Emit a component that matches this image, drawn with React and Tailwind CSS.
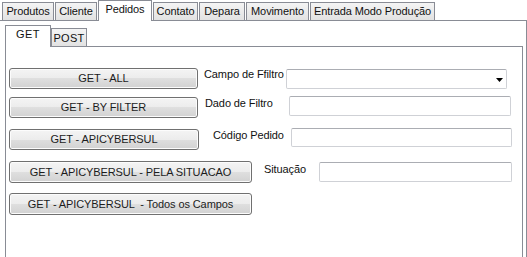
const btn =
  'flex items-center justify-center shrink-0 rounded-[3px] border border-[#707070] bg-[linear-gradient(to_bottom,#f4f4f4_0%,#ececec_50%,#dfdfdf_50%,#d2d2d2_100%)] shadow-[inset_0_0_0_1px_#fcfcfc] text-[#1c1c1c] whitespace-pre';
const field =
  'shrink-0 rounded-[2px] border border-[#cfd1d6] border-t-[#abadb3] bg-white';
const tab =
  'h-[18px] flex items-center justify-center shrink-0 border border-b-0 border-[#898c95] bg-[linear-gradient(to_bottom,#f4f4f4,#e2e2e2)]';
const tabOn =
  'relative z-10 h-[21px] -mb-px flex items-start justify-center shrink-0 pt-[2px] border border-b-0 border-[#898c95] bg-white';

export default function App() {
  return (
    <div className="w-[527px] h-[257px] overflow-hidden bg-white font-['Liberation_Sans',Arial,sans-serif] text-[11px] leading-[13px] tracking-[-0.1px] text-[#111] flex flex-col">
      {/* main tab strip */}
      <div className="flex items-end h-[20px] pl-[2px] gap-px">
        <div className={`${tab} w-[52px]`}>Produtos</div>
        <div className={`${tab} w-[42px]`}>Cliente</div>
        <div className={`${tabOn} w-[54px]`}>Pedidos</div>
        <div className={`${tab} w-[45px]`}>Contato</div>
        <div className={`${tab} w-[46px]`}>Depara</div>
        <div className={`${tab} w-[63px]`}>Movimento</div>
        <div className={`${tab} w-[125px]`}>Entrada Modo Produção</div>
      </div>

      <div className="flex-1 flex flex-col border-t border-r border-[#898c95] pl-[5px] pr-[3px] pt-[4px]">
        {/* inner tabs */}
        <div className="flex items-end h-[21px]">
          <div className={`${tabOn} w-[46px] h-[22px] tracking-[0.5px]`}>GET</div>
          <div className={`${tab} w-[36px] h-[17px] pt-px tracking-[0.3px]`}>POST</div>
        </div>

        <div className="flex-1 flex flex-col border-t border-l border-r border-[#898c95] pl-[3px] pt-[21px]">
          <div className="flex items-start">
            <button className={`${btn} w-[189px] h-[21px]`}>GET - ALL</button>
            <span className="ml-[6px] w-[82px] shrink-0">Campo de Ffiltro</span>
            <div className={`${field} mt-px w-[221px] h-[20px] flex items-center justify-end pr-[3px]`}>
              <svg width="7" height="4" viewBox="0 0 7 4" className="mt-[2px]">
                <path d="M0 0h7L3.5 4z" fill="#000" />
              </svg>
            </div>
          </div>

          <div className="flex items-start mt-[7px]">
            <button className={`${btn} mt-px w-[189px] h-[21px]`}>GET - BY FILTER</button>
            <span className="ml-[7px] mt-px w-[84px] shrink-0">Dado de Filtro</span>
            <div className={`${field} w-[222px] h-[20px]`} />
          </div>

          <div className="flex items-start mt-[10px]">
            <button className={`${btn} mt-px w-[190px] h-[21px]`}>GET - APICYBERSUL</button>
            <span className="ml-[14px] mt-px w-[78px] shrink-0">Código Pedido</span>
            <div className={`${field} w-[221px] h-[19px]`} />
          </div>

          <div className="flex items-start mt-[11px]">
            <button className={`${btn} w-[243px] h-[22px]`}>GET - APICYBERSUL - PELA SITUACAO</button>
            <span className="ml-[12px] mt-[2px] w-[55px] shrink-0">Situação</span>
            <div className={`${field} mt-px w-[193px] h-[20px]`} />
          </div>

          <div className="flex items-start mt-[10px]">
            <button className={`${btn} w-[243px] h-[22px]`}>GET - APICYBERSUL  - Todos os Campos</button>
          </div>
        </div>
      </div>
    </div>
  );
}
